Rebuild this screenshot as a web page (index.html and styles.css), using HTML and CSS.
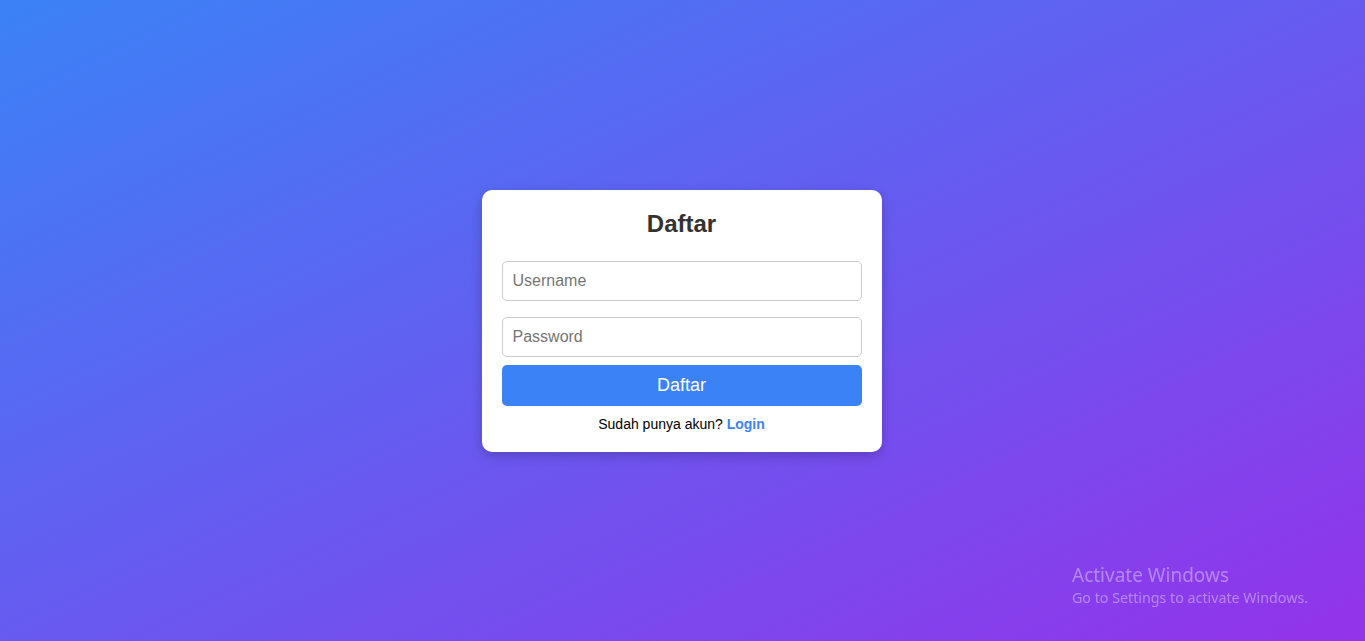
FILE: index.html
```html
<!DOCTYPE html>
<html lang="id">
<head>
<meta charset="utf-8">
<title>Daftar</title>
<link rel="stylesheet" href="styles.css">
</head>
<body>
  <div class="card">
    <h2 class="title">Daftar</h2>
    <form class="form">
      <input class="field" type="text" placeholder="Username">
      <input class="field" type="password" placeholder="Password">
      <button class="btn" type="button">Daftar</button>
    </form>
    <p class="note">Sudah punya akun? <a class="link" href="#">Login</a></p>
  </div>
  <div class="watermark">
    <div class="wm-title">Activate Windows</div>
    <div class="wm-sub">Go to Settings to activate Windows.</div>
  </div>
</body>
</html>
```
FILE: styles.css
```css
* { box-sizing: border-box; }
html, body { height: 100%; }
body {
  margin: 0;
  padding-right: 2px;
  font-family: "Liberation Sans", Arial, sans-serif;
  background: linear-gradient(to bottom right, #3b82f6, #9333ea);
  display: flex;
  align-items: center;
  justify-content: center;
  min-height: 100vh;
}
.card {
  width: 400px;
  background: #fff;
  border-radius: 10px;
  padding: 20px;
  box-shadow: 0 4px 12px rgba(0, 0, 0, 0.2);
  text-align: center;
}
.title {
  margin: 0 0 23px;
  font-size: 24px;
  font-weight: bold;
  color: #333;
  line-height: 28px;
}
.form { margin: 0; }
.field {
  display: block;
  width: 100%;
  height: 40px;
  margin: 8px 0 16px;
  padding: 10px;
  font-family: "Liberation Sans", Arial, sans-serif;
  font-size: 16px;
  border: 1px solid #ccc;
  border-radius: 5px;
  color: #333;
}
.field + .field { margin-top: 0; margin-bottom: 8px; }
.field::placeholder { color: #757575; }
.btn {
  display: block;
  width: 100%;
  height: 41px;
  padding: 10px;
  border: none;
  border-radius: 5px;
  background: #3b82f6;
  color: #fff;
  font-family: "Liberation Sans", Arial, sans-serif;
  font-size: 18px;
  cursor: pointer;
}
.note {
  margin: 10px 0 0;
  font-size: 14px;
  line-height: 16px;
  color: #000;
}
.link {
  color: #3b82f6;
  font-weight: bold;
  text-decoration: none;
}
.watermark {
  position: fixed;
  left: 1072px;
  top: 563px;
  font-family: "Noto Sans", "Open Sans", sans-serif;
  color: rgba(255, 255, 255, 0.38);
}
.wm-title { font-size: 19px; line-height: 24px; }
.wm-sub { font-size: 14.25px; line-height: 22px; }
```
